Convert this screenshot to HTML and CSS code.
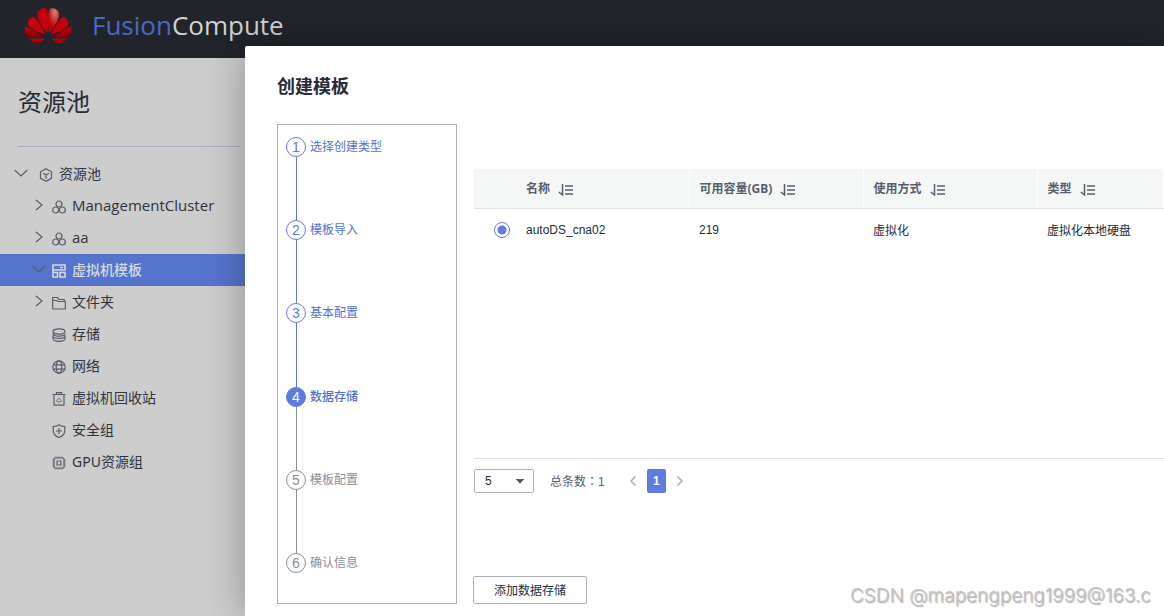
FILE: index.html
```html
<!DOCTYPE html>
<html lang="zh-CN">
<head>
<meta charset="utf-8">
<title>FusionCompute</title>
<link rel="stylesheet" href="styles.css">
</head>
<body>
<svg class="defs" aria-hidden="true">
  <symbol id="down" viewBox="0 0 14 14"><path d="M.7 4 7 10l6.300-6"/></symbol>
  <symbol id="right" viewBox="0 0 14 14"><path d="M4 2l6 5-6 5"/></symbol>
  <symbol id="cluster" viewBox="0 0 14 14"><circle cx="7" cy="4" r="3"/><circle cx="3.700" cy="10" r="3"/><circle cx="10.300" cy="10" r="3"/></symbol>
  <symbol id="sort" viewBox="0 0 16 14"><path d="M4.500 1v11L.8 9M7 3h8M7 7h8M7 11h8"/></symbol>
</svg>
<header class="topbar">
  <svg class="logo" viewBox="0 0 144 110" aria-hidden="true">
    <defs>
      <radialGradient id="shine" cx=".6" cy=".15" r=".6"><stop offset="0" stop-color="#d08a78"/><stop offset="1" stop-color="#c4000c"/></radialGradient>
      <linearGradient id="low" x1="0" y1="0" x2="0" y2="1"><stop offset="0" stop-color="#c4000c"/><stop offset="1" stop-color="#850007"/></linearGradient>
    </defs>
    <g fill="#c4000c">
      <path d="M70 78C74 50 75 14 67 4 55 0 42 8 40 18 37 34 54 60 70 78z"/>
      <path d="M65 82C53 58 40 38 28 28 16 32 9 42 12 53 17 66 44 77 65 82z"/>
      <path fill="url(#low)" d="M60 91C43 78 18 63 4 58 0 70 4 82 14 90 28 92 45 92 60 91z"/>
      <path fill="url(#low)" d="M62 95H17c7 12 20 17 31 12 6-2 10-7 14-12z"/>
      <path fill="url(#shine)" d="M75 78C71 50 70 14 78 4c12-4 25 4 27 14 3 16-14 42-30 60z"/>
      <path d="M80 82c12-24 25-44 37-54 12 4 19 14 16 25-5 13-32 24-53 29z"/>
      <path fill="url(#low)" d="M85 91c17-13 42-28 56-33 4 12 0 24-10 32-14 2-31 2-46 1z"/>
      <path fill="url(#low)" d="M83 95h45c-7 12-20 17-31 12-6-2-10-7-14-12z"/>
    </g>
  </svg>
  <span class="brand"><span class="accent">Fusion</span>Compute</span>
</header>
<nav class="sidebar" aria-label="资源池">
  <h1>资源池</h1>
  <a class="item root" href="#"><svg class="icon"><use href="#down"/></svg><svg class="icon" viewBox="0 0 14 14"><path d="M7 .8l5.500 3v6.500L7 13.300l-5.500-3V3.800zM4 5.300 7 7l3-1.700M7 7v4"/></svg>资源池</a>
  <a class="item latin" href="#"><svg class="icon"><use href="#right"/></svg><svg class="icon"><use href="#cluster"/></svg>ManagementCluster</a>
  <a class="item latin" href="#"><svg class="icon"><use href="#right"/></svg><svg class="icon"><use href="#cluster"/></svg>aa</a>
  <a class="item selected" href="#" aria-current="page"><svg class="icon"><use href="#down"/></svg><svg class="icon bold" viewBox="0 0 14 14"><path d="M1 1h12v5H1zM8 3.500h3M1 6v2.500M1 8.500h4.500v4.500H1zM8 8.500h5v4.500H8z"/></svg>虚拟机模板</a>
  <a class="item" href="#"><svg class="icon"><use href="#right"/></svg><svg class="icon" viewBox="0 0 14 14"><path d="M.7 13V1.500h4.600L7 3.500h5.300v2M.7 13h12.600V5.500H6L4.500 4.500H.7"/></svg>文件夹</a>
  <a class="item leaf" href="#"><svg class="icon" viewBox="0 0 14 14"><ellipse cx="7" cy="3.500" rx="6" ry="2.700"/><path d="M1 5.500c0 3.500 12 3.500 12 0M1 7.500v3c0 1.500 2.500 2.800 6 2.800s6-1.300 6-2.800v-3M1 8.500c1 2.500 11 2.500 12 0"/></svg>存储</a>
  <a class="item leaf" href="#"><svg class="icon" viewBox="0 0 14 14"><circle cx="7" cy="7" r="6.200"/><ellipse cx="7" cy="7" rx="2.800" ry="6.200"/><path d="M1 4.800h12M1 9.200h12"/></svg>网络</a>
  <a class="item leaf" href="#"><svg class="icon" viewBox="0 0 14 14"><path d="M.5 2.500h13M4.500 2V.7h5V2M2 2.500v10.700h10V2.500"/><path class="fine" d="M5 9.800 4.700 8.500 7 6l2.300 2.500-.3 1.300z"/></svg>虚拟机回收站</a>
  <a class="item leaf" href="#"><svg class="icon" viewBox="0 0 14 14"><path d="M7 .7c2 1.300 4 1.800 5.800 1.800v4c0 3.500-2.500 5.800-5.800 7-3.300-1.200-5.800-3.500-5.800-7v-4C3 2.500 5 2 7 .7zM7 4v6M4 7h6"/></svg>安全组</a>
  <a class="item leaf" href="#"><svg class="icon" viewBox="0 0 14 14"><rect x="2" y="2" width="10" height="10" rx="1"/><path d="M5 5h4v4H5z"/><path class="fine" d="M4 .5V2M6 .5V2M8 .5V2M10 .5V2M4 12v1.500M6 12v1.500M8 12v1.500M10 12v1.500M.5 4H2M.5 6H2M.5 8H2M.5 10H2M12 4h1.500M12 6h1.500M12 8h1.500M12 10h1.500"/></svg>GPU资源组</a>
</nav>
<main class="dialog" role="dialog" aria-labelledby="dialog-title">
  <h2 id="dialog-title">创建模板</h2>
  <div class="content">
    <ol class="steps">
      <li class="step done"><span class="num">1</span><span class="label">选择创建类型</span></li>
      <li class="step done"><span class="num">2</span><span class="label">模板导入</span></li>
      <li class="step done"><span class="num">3</span><span class="label">基本配置</span></li>
      <li class="step current" aria-current="step"><span class="num">4</span><span class="label">数据存储</span></li>
      <li class="step"><span class="num">5</span><span class="label">模板配置</span></li>
      <li class="step"><span class="num">6</span><span class="label">确认信息</span></li>
    </ol>
    <section class="stores">
      <div class="table-area">
        <table>
          <thead>
            <tr>
              <th class="pick"></th>
              <th class="name">名称<svg class="sort"><use href="#sort"/></svg></th>
              <th class="col">可用容量(GB)<svg class="sort"><use href="#sort"/></svg></th>
              <th class="col">使用方式<svg class="sort"><use href="#sort"/></svg></th>
              <th>类型<svg class="sort"><use href="#sort"/></svg></th>
            </tr>
          </thead>
          <tbody>
            <tr>
              <td class="pick"><input type="radio" id="store" name="store" checked></td>
              <td class="name"><label for="store">autoDS_cna02</label></td>
              <td>219</td>
              <td>虚拟化</td>
              <td>虚拟化本地硬盘</td>
            </tr>
          </tbody>
        </table>
      </div>
      <div class="pager">
        <select aria-label="每页条数"><option>5</option><option>10</option></select>
        <span class="total">总条数<span class="colon" lang="zh-TW">：</span>1</span>
        <button class="turn" aria-label="上一页"><svg viewBox="0 0 8 12"><path d="M6.500 1.500 2 6l4.500 4.500"/></svg></button>
        <button class="page">1</button>
        <button class="turn" aria-label="下一页"><svg viewBox="0 0 8 12"><path d="M1.500 1.500 6 6l-4.500 4.500"/></svg></button>
      </div>
      <button class="add">添加数据存储</button>
    </section>
  </div>
</main>
<div class="watermark">CSDN @mapengpeng1999@163.c</div>
</body>
</html>
```
FILE: styles.css
```css
* { box-sizing: border-box; }
body {
  margin: 0;
  min-height: 100vh;
  overflow: hidden;
  background: #cdcdcd;
  color: #282b33;
  font-family: "Liberation Sans", "Noto Sans CJK SC", sans-serif;
  font-size: 12px;
}
svg { fill: none; stroke: currentColor; flex: none; }
.defs { display: none; }
.topbar {
  display: flex;
  align-items: flex-start;
  gap: 20px;
  height: 58px;
  padding: 7px 24px;
  background: #21242b;
}
.logo { width: 48px; height: 37px; stroke: none; }
.brand {
  color: #d2d2d2;
  font-family: "Open Sans", sans-serif;
  font-size: 26px;
  line-height: 36px;
}
.accent { color: #4b69c6; }
.sidebar {
  width: 245px;
  font-family: "Noto Sans", "Noto Sans CJK SC", sans-serif;
}
.sidebar h1 {
  margin: 0 5px 11px 18px;
  padding: 26px 0;
  border-bottom: 1px solid #a9afbf;
  font-size: 24px;
  font-weight: 400;
  line-height: 36px;
}
.item {
  display: flex;
  align-items: center;
  gap: 6px;
  height: 32px;
  padding: 0 0 2px 32px;
  color: #30333c;
  font-size: 14px;
  text-decoration: none;
}
.item.latin { font-family: "Open Sans", sans-serif; font-size: 15px; }
.item.root { padding-left: 14px; }
.root .icon:first-child { margin-right: 5px; }
.item.leaf { padding-left: 52px; }
.item.selected { background: #5574cc; color: #d6d9e2; font-weight: 500; }
.icon { width: 14px; height: 14px; color: #575d6b; stroke-width: 1.2; }
.icon + .icon, .leaf .icon { margin-top: 4px; }
.fine { stroke-width: .8; }
.icon.bold { color: #d6d9e2; stroke-width: 1.6; }
.dialog {
  position: absolute;
  inset: 46px 0 0 245px;
  padding: 28px 0 0 32px;
  border-radius: 2px 0 0 0;
  background: #fff;
  box-shadow: 0 0 40px rgba(0, 0, 0, .3);
}
.dialog h2 {
  margin: 0 0 23px;
  color: #252b3a;
  font-size: 18px;
  line-height: 27px;
}
.content { display: flex; gap: 16px; min-height: 480px; }
.steps {
  display: flex;
  flex: none;
  flex-direction: column;
  width: 180px;
  margin: 0;
  padding: 12px 8px 30px;
  border: 1px solid #adb0b8;
  list-style: none;
}
.step {
  display: grid;
  flex: 1;
  grid-template: 20px 1fr / 20px 1fr;
  column-gap: 4px;
  color: #8a8e99;
  line-height: 20px;
}
.step:last-child { flex: none; }
.step:not(:last-child)::after {
  content: "";
  justify-self: center;
  width: 1px;
  background: currentColor;
}
.num {
  border: 1px solid currentColor;
  border-radius: 50%;
  font-size: 14px;
  line-height: 18px;
  text-align: center;
}
.done, .current .label { color: #5471cf; }
.done .num, .done::after { color: #5e7ce0; }
.current { font-weight: 500; }
.current .num { border-color: #5e7ce0; background: #5e7ce0; color: #fff; }
.stores {
  display: flex;
  flex: 1;
  flex-direction: column;
  min-width: 0;
  padding-top: 45px;
}
.table-area { min-height: 290px; margin-left: 1px; border-bottom: 1px solid #dfe1e6; }
table { width: 100%; border-collapse: collapse; table-layout: fixed; }
th, td { padding: 0 10px; text-align: left; white-space: nowrap; }
th {
  height: 39px;
  border-right: 1px solid #fff;
  border-bottom: 1px solid #dfe1e6;
  background: #f5f7f7;
  color: #575d6c;
  font-family: "Noto Sans", "Noto Sans CJK SC", sans-serif;
  font-weight: 700;
}
td { height: 43px; color: #252b3a; }
.pick { width: 52px; padding: 0 0 0 20px; border-right: 0; }
th.name { width: 163px; }
.name { padding-left: 0; }
.col { width: 174px; }
.sort { width: 16px; height: 14px; margin-left: 8px; stroke-width: 1.5; vertical-align: -4px; }
input[type="radio"] {
  appearance: none;
  display: block;
  width: 16px;
  height: 16px;
  margin: 0;
  border: 1px solid #5e7ce0;
  border-radius: 50%;
  background: radial-gradient(circle, #5e7ce0 4px, #fff 5px);
}
.pager { display: flex; align-items: center; margin-top: 10px; color: #575d6c; }
select, button {
  border: 1px solid #adb0b8;
  border-radius: 2px;
  background: #fff;
  color: #252b3a;
  font: inherit;
}
select {
  appearance: none;
  width: 60px;
  height: 24px;
  margin-left: 1px;
  padding: 0 10px;
  background:
    linear-gradient(to bottom left, #575d6c 50%, transparent 52%) 41px 9px / 4px 5px no-repeat,
    linear-gradient(to bottom right, #575d6c 50%, transparent 52%) 45px 9px / 4px 5px no-repeat;
}
.total { margin: 0 20px 0 16px; line-height: 16px; }
.colon { font-family: "Noto Sans CJK TC", sans-serif; }
.turn { display: flex; padding: 4px; border: 0; color: #adb0b8; }
.turn svg { width: 8px; height: 12px; stroke-width: 1.5; }
.page {
  width: 19px;
  height: 24px;
  margin: 0 6px;
  padding: 0;
  border: 0;
  background: #5e7ce0;
  color: #fff;
  font-weight: 700;
}
.add { align-self: flex-start; height: 28px; margin-top: auto; padding: 0 20px 2px; }
.watermark {
  position: absolute;
  right: 13px;
  bottom: 6px;
  color: #c4c4c4;
  font-family: Inter, sans-serif;
  font-size: 19px;
  font-weight: 300;
  line-height: 28px;
  text-shadow: 1px 1px 1px #aaa;
}
```
